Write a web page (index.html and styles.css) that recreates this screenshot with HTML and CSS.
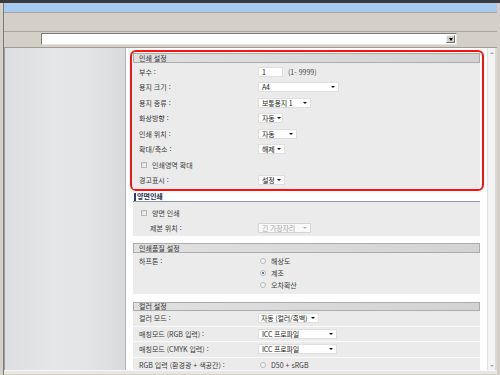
FILE: index.html
```html
<!DOCTYPE html>
<html lang="ko">
<head>
<meta charset="utf-8">
<link rel="stylesheet" href="styles.css">
</head>
<body>
<div class="top"></div>
<div class="win">
  <div class="title"></div>
  <div class="toolbar"></div>
  <div class="comborow">
    <div class="combo"><span class="combo-btn"><span class="tri"></span></span></div>
  </div>
  <div class="main">
    <div class="side"></div>
    <div class="content">
      <div class="redbox">
        <section class="sec">
          <div class="sec-h">인쇄 설정</div>
          <div class="sec-b b1">
            <div class="row"><span class="lbl">부수 :</span><span class="ctl"><span class="input w25">1</span><span class="hint">(1- 9999)</span></span></div>
            <div class="row"><span class="lbl">용지 크기 :</span><span class="ctl"><span class="sel w81"><span>A4</span><i class="arr"></i></span></span></div>
            <div class="row"><span class="lbl">용지 종류 :</span><span class="ctl"><span class="sel w53"><span>보통용지 1</span><i class="arr"></i></span></span></div>
            <div class="row"><span class="lbl">화상방향 :</span><span class="ctl"><span class="sel w25"><span>자동</span><i class="arr"></i></span></span></div>
            <div class="row"><span class="lbl">인쇄 위치 :</span><span class="ctl"><span class="sel w39"><span>자동</span><i class="arr"></i></span></span></div>
            <div class="row"><span class="lbl">확대/축소 :</span><span class="ctl"><span class="sel w27"><span>해제</span><i class="arr"></i></span></span></div>
            <div class="row"><span class="chk-line"><span class="chk"></span>인쇄영역 확대</span></div>
            <div class="row"><span class="lbl">경고표시 :</span><span class="ctl"><span class="sel w27"><span>설정</span><i class="arr"></i></span></span></div>
          </div>
        </section>
      </div>

      <section class="sec sec-dup">
        <div class="sec-h2">양면인쇄</div>
        <div class="sec-b b2">
          <div class="row"><span class="chk-line"><span class="chk"></span>양면 인쇄</span></div>
          <div class="row"><span class="lbl ind">제본 위치 :</span><span class="ctl"><span class="sel w53 dis"><span>긴 가장자리</span><i class="arr"></i></span></span></div>
        </div>
      </section>

      <section class="sec sec-gap">
        <div class="sec-h">인쇄품질 설정</div>
        <div class="sec-b b3">
          <div class="rrow"><span class="lbl">하프톤 :</span><span class="ctl"><span class="rad"></span>해상도</span></div>
          <div class="rrow"><span class="lbl"></span><span class="ctl"><span class="rad on"></span>계조</span></div>
          <div class="rrow"><span class="lbl"></span><span class="ctl"><span class="rad"></span>오차확산</span></div>
        </div>
      </section>

      <section class="sec sec-gap2">
        <div class="sec-h h9">컬러 설정</div>
        <div class="sec-b b4">
          <div class="row sep"><span class="lbl">컬러 모드 :</span><span class="ctl"><span class="sel w60"><span>자동 (컬러/흑백)</span><i class="arr"></i></span></span></div>
          <div class="row sep"><span class="lbl">매칭모드 (RGB 입력) :</span><span class="ctl"><span class="sel w79"><span>ICC 프로파일</span><i class="arr"></i></span></span></div>
          <div class="row sep"><span class="lbl">매칭모드 (CMYK 입력) :</span><span class="ctl"><span class="sel w79"><span>ICC 프로파일</span><i class="arr"></i></span></span></div>
          <div class="row"><span class="lbl">RGB 입력 (환경광 + 색공간) :</span><span class="ctl"><span class="rad"></span>D50 + sRGB</span></div>
        </div>
      </section>
    </div>
    <div class="scroll"><i class="up"></i><i class="down"></i></div>
  </div>
  <div class="bottom"></div>
</div>
</body>
</html>
```

FILE: styles.css
```css
* { box-sizing: border-box; }
html, body { margin: 0; padding: 0; }
body {
  width: 500px;
  height: 375px;
  overflow: hidden;
  background: #d4d0c8;
  font-family: "Noto Sans CJK KR", "Noto Sans", sans-serif;
  font-size: 7px;
  color: #3a3a3a;
}
.top { height: 3px; background: #3b3b3b; }
.win {
  margin-left: 3px;
  width: 494px;
  border-left: 1px solid #7d7b77;
  height: 372px;
  display: flex;
  flex-direction: column;
}
.title { height: 9px; background: #a6caf0; }
.toolbar {
  height: 20px;
  background: #d4d0c8;
  border-top: 1px solid #a9a59e;
  border-bottom: 1px solid #a9a59e;
}
.comborow {
  height: 16px;
  padding: 1px 0 0 37px;
  border-bottom: 1px solid #a09c95;
}
.combo {
  width: 416px;
  height: 12px;
  background: #fff;
  border: 1px solid #7a7a7a;
  border-right-color: #e6e6e6;
  border-bottom-color: #e6e6e6;
  display: flex;
  justify-content: flex-end;
  padding: 1px;
}
.combo-btn {
  width: 9px;
  height: 8px;
  background: #d4d0c8;
  border: 1px solid #f4f4f4;
  border-right-color: #6e6e6e;
  border-bottom-color: #6e6e6e;
  display: flex;
  align-items: center;
  justify-content: center;
}
.tri {
  border-left: 2.5px solid transparent;
  border-right: 2.5px solid transparent;
  border-top: 3px solid #000;
}
.main {
  display: flex;
  height: 322px;
}
.side {
  width: 122px;
  border-left: 1px solid #9c9c9c;
  border-right: 1px solid #b4b4b4;
  background: linear-gradient(to right, #dddee0, #e5e6e8 40%, #e3e4e6 70%, #dadbdd);
}
.content {
  width: 361px;
  background: #fff;
  overflow: hidden;
  padding-top: 2px;
}
.scroll {
  width: 10px;
  background: #f3f3f3;
  border-left: 1px solid #e2e2e2;
  border-right: 2px solid #dcd9d2;
  display: flex;
  flex-direction: column;
  justify-content: space-between;
  align-items: center;
  padding: 4px 0 3px;
}
.up, .down {
  width: 0;
  height: 0;
  border-left: 2px solid transparent;
  border-right: 2px solid transparent;
}
.up { border-bottom: 2px solid #a8a8a8; }
.down { border-top: 2px solid #a8a8a8; }
.bottom {
  height: 4px;
  background: #e9e7e1;
  border-top: 1px solid #f7f7f5;
}

.redbox {
  margin-left: 4px;
  width: 354px;
  border: 2px solid #ff1010;
  border-radius: 6px;
  padding: 1px 0 0 1px;
}
.sec { width: 347px; }
.sec-h {
  height: 10px;
  border: 1px solid #acacac;
  background: linear-gradient(to right, #e0e0e0, #d3d3d3);
  padding-left: 5px;
  line-height: 8px;
  color: #333;
}
.sec-h.h9 { height: 9px; line-height: 7px; }
.sec-b { background: #ebebeb; }
.b1 { padding: 1px 0 0; height: 126px; }
.row {
  height: 15.5px;
  display: grid;
  grid-template-columns: 119px 1fr;
  align-items: center;
  padding-left: 6px;
}
.lbl { white-space: nowrap; }
.lbl.ind { padding-left: 11px; }
.ctl { display: flex; align-items: center; white-space: nowrap; }
.input, .sel {
  height: 10px;
  background: #fff;
  border: 1px solid #dedede;
  line-height: 8px;
  padding-left: 3px;
  display: flex;
  align-items: center;
  color: #222;
}
.sel {
  justify-content: space-between;
  padding-right: 3px;
  gap: 3px;
  letter-spacing: -0.2px;
}
.arr {
  flex: none;
  width: 0; height: 0;
  border-left: 2px solid transparent;
  border-right: 2px solid transparent;
  border-top: 2.5px solid #111;
}
.sel.dis { color: #a4a4a4; border-color: #d4d4d4; background: #f9f9f9; }
.sel.dis .arr { border-top-color: #b0b0b0; }
.hint { margin-left: 5px; color: #444; }
.w25 { width: 25px; }
.w27 { width: 27px; }
.w39 { width: 39px; }
.w53 { width: 53px; }
.w60 { width: 61px; padding-left: 2px; }
.w79 { width: 79px; }
.w81 { width: 81px; }
.chk-line {
  grid-column: 1 / 3;
  display: flex;
  align-items: center;
  padding-left: 2px;
}
.chk {
  width: 6px; height: 6px;
  border: 1px solid #b5b5b5;
  background: linear-gradient(135deg, #dcdcdc, #f6f6f6);
  margin-right: 5px;
}
.rad {
  width: 6px; height: 6px;
  border-radius: 50%;
  border: 1px solid #b8b8b8;
  background: #f4f4f4;
  margin: 0 5px 0 2px;
  display: flex;
  align-items: center;
  justify-content: center;
}
.rad.on::after {
  content: "";
  width: 2px; height: 2px;
  border-radius: 50%;
  background: #2f4f7a;
}

.sec-dup { margin-left: 7px; }
.sec-h2 {
  height: 11px;
  border-bottom: 1px solid #8e98a4;
  padding: 1px 0 0 1px;
  display: flex;
  font-weight: bold;
  color: #1c2e52;
  line-height: 9px;
}
.sec-h2::before {
  content: "";
  width: 2px;
  height: 8px;
  background: #1f3f7a;
  margin: 1px 1px 0 0;
}
.b2 { padding-top: 3px; height: 34px; }
.sec-gap { margin: 7px 0 0 7px; }
.b3 { padding-top: 2px; height: 41px; }
.rrow {
  height: 12px;
  display: grid;
  grid-template-columns: 119px 1fr;
  align-items: center;
  padding-left: 6px;
}
.sec-gap2 { margin: 8px 0 0 7px; }
.b4 { height: 70px; }
.row.sep { border-bottom: 1px solid #fafafa; }
```
